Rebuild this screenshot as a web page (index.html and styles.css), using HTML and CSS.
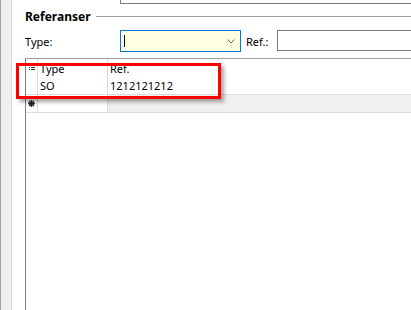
FILE: index.html
```html
<!DOCTYPE html>
<html lang="no">
<head>
    <meta charset="UTF-8">
    <title>Referanser</title>
    <link rel="stylesheet" href="styles.css">
</head>
<body>
    <div class="sidebar"></div>

    <div class="main">
        <div class="prev-box"></div>

        <div class="group-title">
            <span>Referanser</span>
            <div class="group-line"></div>
        </div>

        <div class="form-row">
            <label class="label-type">Type:</label>
            <div class="combo">
                <span class="caret"></span>
                <svg class="chevron" width="8" height="5" viewBox="0 0 8 5">
                    <polyline points="0.5,0.5 4,4 7.5,0.5" fill="none" stroke="#606060" stroke-width="1"/>
                </svg>
            </div>
            <label class="label-ref">Ref.:</label>
            <div class="textbox"></div>
        </div>

        <div class="grid">
            <div class="grid-row header-row">
                <div class="row-head">
                    <svg width="6" height="6" viewBox="0 0 6 6">
                        <rect x="0" y="0" width="1" height="1" fill="#333"/>
                        <rect x="2" y="0" width="4" height="1" fill="#333"/>
                        <rect x="0" y="2" width="1" height="1" fill="#333"/>
                        <rect x="2" y="2" width="4" height="1" fill="#333"/>
                        <rect x="0" y="4" width="1" height="1" fill="#333"/>
                        <rect x="2" y="4" width="4" height="1" fill="#333"/>
                    </svg>
                </div>
                <div class="cell col-type">Type</div>
                <div class="cell col-ref">Ref.</div>
            </div>
            <div class="grid-row data-row">
                <div class="row-head"></div>
                <div class="cell col-type">SO</div>
                <div class="cell col-ref">1212121212</div>
            </div>
            <div class="grid-row new-row">
                <div class="row-head">
                    <svg width="7" height="7" viewBox="0 0 7 7">
                        <path d="M3.5 0 V7 M0 3.5 H7 M1 1 L6 6 M6 1 L1 6" stroke="#222" stroke-width="1.3"/>
                    </svg>
                </div>
                <div class="cell col-type"></div>
                <div class="cell col-ref"></div>
            </div>

            <div class="highlight-box"></div>
        </div>
    </div>
</body>
</html>
```

FILE: styles.css
```css
html, body {
    margin: 0;
    height: 100%;
}
body {
    display: flex;
    background-color: #ffffff;
    color: #000000;
    font-family: "Noto Sans", "Liberation Sans", sans-serif;
    font-size: 11px;
    overflow: hidden;
}
.sidebar {
    width: 10px;
    background-color: #f0f0f0;
    border-left: 1px solid #a0a0a0;
    border-right: 1px solid #dadada;
}
.main {
    flex: 1;
    display: flex;
    flex-direction: column;
    padding-left: 13px;
    min-width: 0;
}
.prev-box {
    margin-left: 95px;
    height: 3px;
    border-left: 1px solid #7a7a7a;
    border-bottom: 1px solid #7a7a7a;
}
.group-title {
    display: flex;
    align-items: center;
    height: 14px;
    margin-top: 5px;
    font-weight: bold;
    font-size: 12px;
}
.group-line {
    flex: 1;
    height: 1px;
    margin-left: 5px;
    background-color: #a0a0a0;
}
.form-row {
    display: flex;
    align-items: center;
    height: 22px;
    margin-top: 7px;
}
.label-type {
    width: 95px;
}
.combo {
    position: relative;
    display: flex;
    align-items: center;
    justify-content: space-between;
    box-sizing: border-box;
    width: 121px;
    height: 22px;
    padding: 0 5px 0 3px;
    background-color: #ffffe1;
    border: 1px solid #0078d7;
}
.caret {
    width: 1px;
    height: 12px;
    background-color: #000000;
}
.label-ref {
    width: 31px;
    margin-left: 5px;
}
.textbox {
    flex: 1;
    box-sizing: border-box;
    height: 21px;
    margin-right: -4px;
    align-self: flex-start;
    border: 1px solid #7a7a7a;
}
.grid {
    position: relative;
    flex: 1;
    margin-top: 6px;
    border-top: 1px solid #a0a0a0;
    border-left: 1px solid #808080;
}
.grid-row {
    display: flex;
    height: 18px;
}
.data-row {
    height: 17px;
    border-bottom: 1px solid #dcdcdc;
}
.new-row {
    height: 17px;
    border-bottom: 1px solid #dcdcdc;
}
.row-head {
    display: flex;
    align-items: center;
    justify-content: center;
    width: 11px;
    border-right: 1px solid #dcdcdc;
}
.cell {
    display: flex;
    align-items: center;
    box-sizing: border-box;
    padding-left: 2px;
}
.col-type {
    width: 70px;
    border-right: 1px solid #dcdcdc;
}
.col-ref {
    flex: 1;
}
.new-row .col-ref {
    background-color: #f0f0f0;
}
.highlight-box {
    position: absolute;
    left: -10px;
    top: 4px;
    width: 205px;
    height: 36px;
    box-sizing: border-box;
    border: 3px solid #ff0000;
    box-shadow: 3px 3px 4px rgba(0, 0, 0, 0.35);
}
```
